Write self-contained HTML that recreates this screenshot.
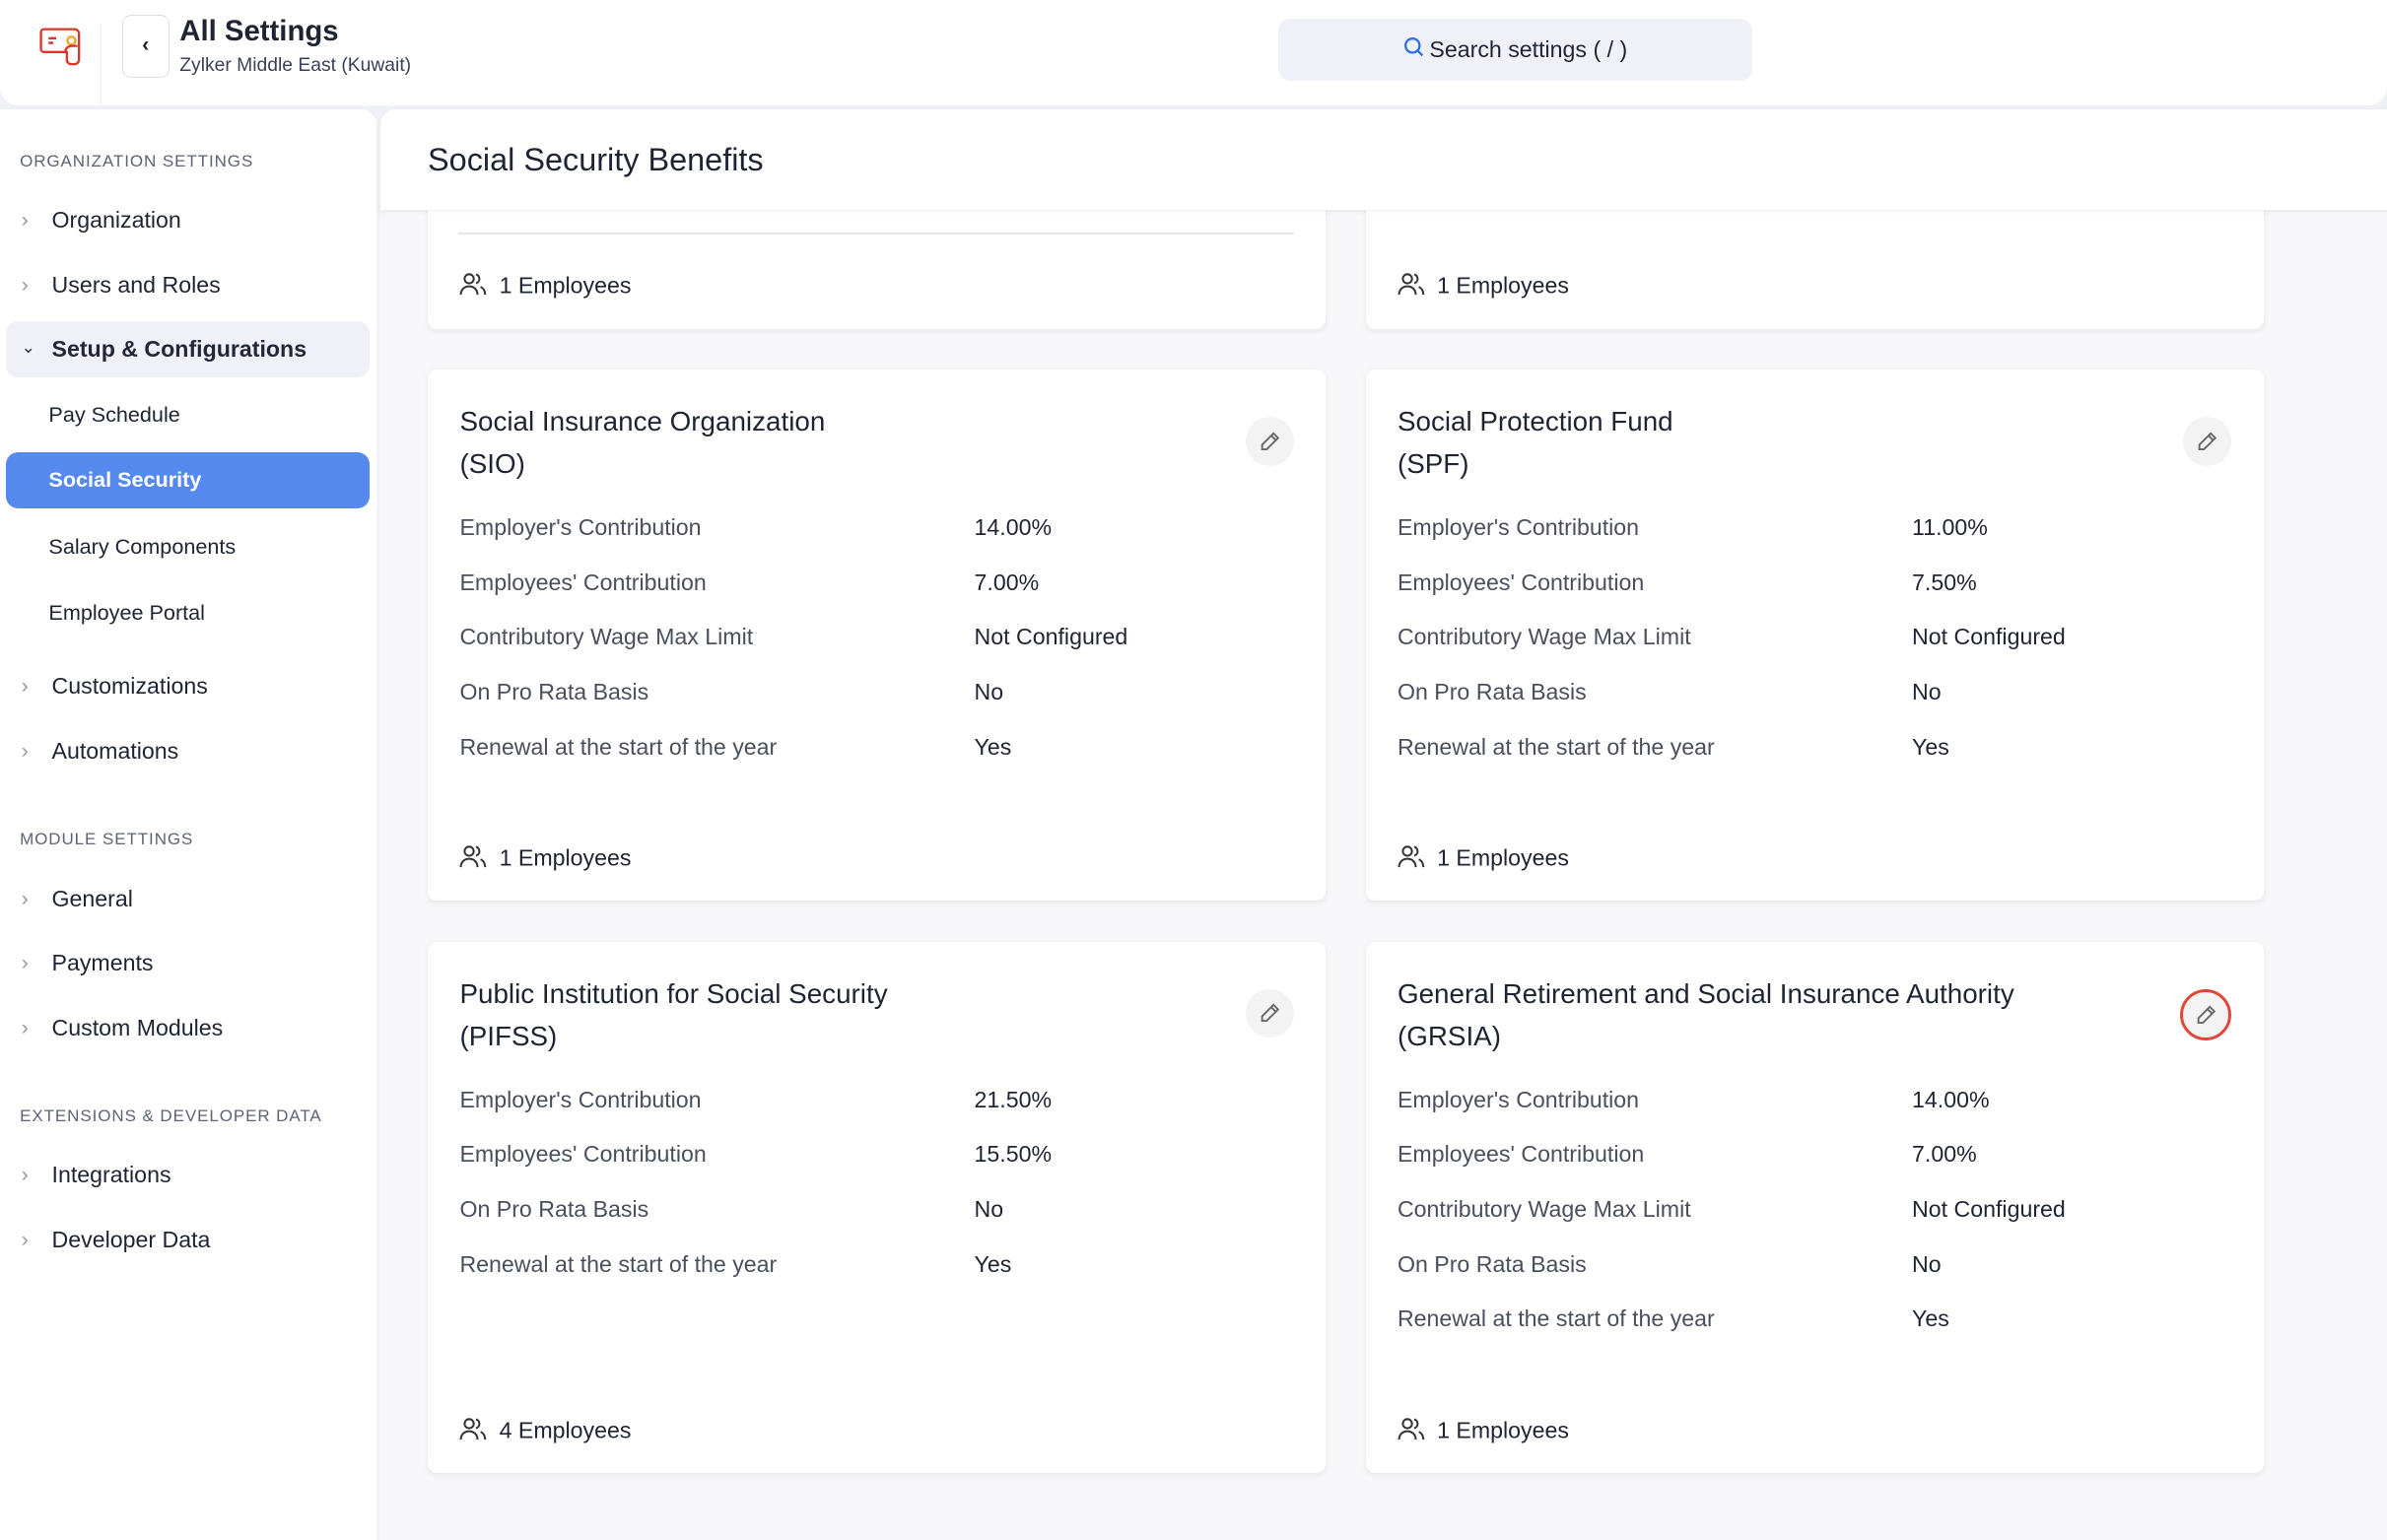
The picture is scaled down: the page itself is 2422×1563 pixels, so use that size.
<!DOCTYPE html>
<html><head><meta charset="utf-8"><style>
html,body{margin:0;padding:0}
body{width:1568px;height:1001px;zoom:1.54464;background:#f0f1f7;font-family:"Liberation Sans",sans-serif;color:#1f2433;position:relative;overflow:hidden}
.abs{position:absolute}
.top{left:0;top:0;width:1568px;height:69px;background:#fff;border-radius:0 0 12px 12px}
.side{left:0;top:72px;width:247px;height:940px;background:#fff;border-radius:0 10px 0 0}
.main{left:250px;top:72px;width:1330px;height:940px;background:#f7f7f9;border-radius:10px 0 0 0}
.mhead{left:250px;top:72px;width:1330px;height:66px;background:#fff;box-shadow:0 1px 3px rgba(0,0,0,.06);border-radius:10px 0 0 0}
.sec{font-size:11px;letter-spacing:.6px;color:#5d6374;left:13px}
.it{left:34px;font-size:15px;color:#1f2433}
.chev{left:14px;font-size:14px;color:#999}
.sub{left:32px;font-size:14px;color:#1f2433}
.card{background:#fff;border-radius:6px;box-shadow:0 1px 4px rgba(0,0,0,.07);width:590px}
.t{font-size:18px;color:#1f2433;line-height:28px;left:21px;top:20px}
.r{font-size:15px;color:#4a4f5c;left:21px}
.v{font-size:15px;color:#1f2433;left:359px}
.emp{font-size:15px;color:#1f2433;left:21px}
.ed{width:32px;height:32px;border-radius:50%;background:#f3f3f4;right:21px;top:31px;display:flex;align-items:center;justify-content:center}
</style></head><body>
<div class="abs top"></div>
<svg class="abs" style="left:26px;top:16px" width="30" height="30" viewBox="0 0 30 30"><path d="M3 3h20a3 3 0 0 1 3 3v17a3 3 0 0 1-3 3h-2a3 3 0 0 1-3-3v-5H3a2 2 0 0 1-2-2V5a2 2 0 0 1 2-2z" fill="none" stroke="#d9352c" stroke-width="1.5"/><path d="M6 9h5M6 12h3" stroke="#d9352c" stroke-width="1.6"/><circle cx="21" cy="10.5" r="2.6" fill="none" stroke="#f0a830" stroke-width="1.6"/><path d="M17 18a4 4 0 0 1 4-4h4" fill="none" stroke="#d9352c" stroke-width="1.5"/></svg>
<div class="abs" style="left:66px;top:16px;width:1px;height:64px;background:#eee"></div>
<div class="abs" style="left:80px;top:10px;width:30px;height:40px;border:1px solid #dcdde3;border-radius:6px;text-align:center;line-height:38px;font-size:14px;font-weight:bold">&#8249;</div>
<div class="abs" style="left:118px;top:10px;font-size:19px;font-weight:bold">All Settings</div>
<div class="abs" style="left:118px;top:36px;font-size:12.5px;color:#3b4257">Zylker Middle East (Kuwait)</div>
<div class="abs" style="left:840px;top:12px;width:311px;height:41px;background:#f0f1f8;border-radius:8px;text-align:center;line-height:41px;font-size:15px">
<svg width="14" height="14" viewBox="0 0 14 14" style="vertical-align:-1px;margin-right:3px"><circle cx="6" cy="6" r="4.6" fill="none" stroke="#2f6fe4" stroke-width="1.5"/><path d="M9.5 9.5l3 3" stroke="#2f6fe4" stroke-width="1.5"/></svg>Search settings ( / )</div>

<div class="abs side"></div>
<div class="abs sec" style="top:100px">ORGANIZATION SETTINGS</div>
<div class="abs chev" style="top:136px">&#8250;</div><div class="abs it" style="top:136px">Organization</div>
<div class="abs chev" style="top:179px">&#8250;</div><div class="abs it" style="top:179px">Users and Roles</div>
<div class="abs" style="left:4px;top:211px;width:239px;height:37px;background:#eff0f8;border-radius:8px"></div>
<div class="abs" style="left:14px;top:222px;font-size:11px;color:#333">&#8964;</div><div class="abs it" style="top:221px;font-weight:bold;color:#232838">Setup &amp; Configurations</div>
<div class="abs sub" style="top:264px">Pay Schedule</div>
<div class="abs" style="left:4px;top:297px;width:239px;height:37px;background:#5589ee;border-radius:8px"></div>
<div class="abs sub" style="top:307px;color:#fff;font-weight:bold">Social Security</div>
<div class="abs sub" style="top:351px">Salary Components</div>
<div class="abs sub" style="top:394px">Employee Portal</div>
<div class="abs chev" style="top:442px">&#8250;</div><div class="abs it" style="top:442px">Customizations</div>
<div class="abs chev" style="top:485px">&#8250;</div><div class="abs it" style="top:485px">Automations</div>
<div class="abs sec" style="top:545px">MODULE SETTINGS</div>
<div class="abs chev" style="top:582px">&#8250;</div><div class="abs it" style="top:582px">General</div>
<div class="abs chev" style="top:624px">&#8250;</div><div class="abs it" style="top:624px">Payments</div>
<div class="abs chev" style="top:667px">&#8250;</div><div class="abs it" style="top:667px">Custom Modules</div>
<div class="abs sec" style="top:727px">EXTENSIONS &amp; DEVELOPER DATA</div>
<div class="abs chev" style="top:763px">&#8250;</div><div class="abs it" style="top:763px">Integrations</div>
<div class="abs chev" style="top:806px">&#8250;</div><div class="abs it" style="top:806px">Developer Data</div>

<div class="abs main"></div>

<!-- row0 -->
<div class="abs card" style="left:281px;top:120px;height:96px"><div class="abs" style="left:20px;top:33px;width:549px;height:1px;background:#e6e6ea"></div><div class="abs emp" style="top:59px"><svg width="18" height="16" viewBox="0 0 18 16" style="vertical-align:-2px;margin-right:8px"><circle cx="6.5" cy="4.5" r="3" fill="none" stroke="#333" stroke-width="1.3"/><path d="M1 15c0-3.5 2.5-5.5 5.5-5.5S12 11.5 12 15M11 1.6a3 3 0 0 1 0 5.8M14 9.8c1.8.8 3 2.6 3 5.2" fill="none" stroke="#333" stroke-width="1.3"/></svg>1 Employees</div></div>
<div class="abs card" style="left:897px;top:120px;height:96px"><div class="abs emp" style="top:59px"><svg width="18" height="16" viewBox="0 0 18 16" style="vertical-align:-2px;margin-right:8px"><circle cx="6.5" cy="4.5" r="3" fill="none" stroke="#333" stroke-width="1.3"/><path d="M1 15c0-3.5 2.5-5.5 5.5-5.5S12 11.5 12 15M11 1.6a3 3 0 0 1 0 5.8M14 9.8c1.8.8 3 2.6 3 5.2" fill="none" stroke="#333" stroke-width="1.3"/></svg>1 Employees</div></div>

<div class="abs mhead"></div>
<div class="abs" style="left:281px;top:93px;font-size:21px;color:#1f2433">Social Security Benefits</div>

<!-- row1 -->
<div class="abs card" style="left:281px;top:243px;height:349px">
<div class="abs t">Social Insurance Organization<br>(SIO)</div>
<div class="abs ed"><svg width="16" height="16" viewBox="0 0 16 16"><path d="M10.5 2.5l3 3L6 13H3v-3z M9 4l3 3" fill="none" stroke="#666" stroke-width="1.2"/></svg></div>
<div class="abs r" style="top:95px">Employer's Contribution</div><div class="abs v" style="top:95px">14.00%</div>
<div class="abs r" style="top:131px">Employees' Contribution</div><div class="abs v" style="top:131px">7.00%</div>
<div class="abs r" style="top:167px">Contributory Wage Max Limit</div><div class="abs v" style="top:167px">Not Configured</div>
<div class="abs r" style="top:203px">On Pro Rata Basis</div><div class="abs v" style="top:203px">No</div>
<div class="abs r" style="top:239px">Renewal at the start of the year</div><div class="abs v" style="top:239px">Yes</div>
<div class="abs emp" style="top:312px"><svg width="18" height="16" viewBox="0 0 18 16" style="vertical-align:-2px;margin-right:8px"><circle cx="6.5" cy="4.5" r="3" fill="none" stroke="#333" stroke-width="1.3"/><path d="M1 15c0-3.5 2.5-5.5 5.5-5.5S12 11.5 12 15M11 1.6a3 3 0 0 1 0 5.8M14 9.8c1.8.8 3 2.6 3 5.2" fill="none" stroke="#333" stroke-width="1.3"/></svg>1 Employees</div>
</div>
<div class="abs card" style="left:897px;top:243px;height:349px">
<div class="abs t">Social Protection Fund<br>(SPF)</div>
<div class="abs ed"><svg width="16" height="16" viewBox="0 0 16 16"><path d="M10.5 2.5l3 3L6 13H3v-3z M9 4l3 3" fill="none" stroke="#666" stroke-width="1.2"/></svg></div>
<div class="abs r" style="top:95px">Employer's Contribution</div><div class="abs v" style="top:95px">11.00%</div>
<div class="abs r" style="top:131px">Employees' Contribution</div><div class="abs v" style="top:131px">7.50%</div>
<div class="abs r" style="top:167px">Contributory Wage Max Limit</div><div class="abs v" style="top:167px">Not Configured</div>
<div class="abs r" style="top:203px">On Pro Rata Basis</div><div class="abs v" style="top:203px">No</div>
<div class="abs r" style="top:239px">Renewal at the start of the year</div><div class="abs v" style="top:239px">Yes</div>
<div class="abs emp" style="top:312px"><svg width="18" height="16" viewBox="0 0 18 16" style="vertical-align:-2px;margin-right:8px"><circle cx="6.5" cy="4.5" r="3" fill="none" stroke="#333" stroke-width="1.3"/><path d="M1 15c0-3.5 2.5-5.5 5.5-5.5S12 11.5 12 15M11 1.6a3 3 0 0 1 0 5.8M14 9.8c1.8.8 3 2.6 3 5.2" fill="none" stroke="#333" stroke-width="1.3"/></svg>1 Employees</div>
</div>

<!-- row2 -->
<div class="abs card" style="left:281px;top:619px;height:349px">
<div class="abs t">Public Institution for Social Security<br>(PIFSS)</div>
<div class="abs ed"><svg width="16" height="16" viewBox="0 0 16 16"><path d="M10.5 2.5l3 3L6 13H3v-3z M9 4l3 3" fill="none" stroke="#666" stroke-width="1.2"/></svg></div>
<div class="abs r" style="top:95px">Employer's Contribution</div><div class="abs v" style="top:95px">21.50%</div>
<div class="abs r" style="top:131px">Employees' Contribution</div><div class="abs v" style="top:131px">15.50%</div>
<div class="abs r" style="top:167px">On Pro Rata Basis</div><div class="abs v" style="top:167px">No</div>
<div class="abs r" style="top:203px">Renewal at the start of the year</div><div class="abs v" style="top:203px">Yes</div>
<div class="abs emp" style="top:312px"><svg width="18" height="16" viewBox="0 0 18 16" style="vertical-align:-2px;margin-right:8px"><circle cx="6.5" cy="4.5" r="3" fill="none" stroke="#333" stroke-width="1.3"/><path d="M1 15c0-3.5 2.5-5.5 5.5-5.5S12 11.5 12 15M11 1.6a3 3 0 0 1 0 5.8M14 9.8c1.8.8 3 2.6 3 5.2" fill="none" stroke="#333" stroke-width="1.3"/></svg>4 Employees</div>
</div>
<div class="abs card" style="left:897px;top:619px;height:349px">
<div class="abs t">General Retirement and Social Insurance Authority<br>(GRSIA)</div>
<div class="abs ed" style="border:2px solid #e0463a;width:30px;height:30px;top:31px"><svg width="16" height="16" viewBox="0 0 16 16"><path d="M10.5 2.5l3 3L6 13H3v-3z M9 4l3 3" fill="none" stroke="#666" stroke-width="1.2"/></svg></div>
<div class="abs r" style="top:95px">Employer's Contribution</div><div class="abs v" style="top:95px">14.00%</div>
<div class="abs r" style="top:131px">Employees' Contribution</div><div class="abs v" style="top:131px">7.00%</div>
<div class="abs r" style="top:167px">Contributory Wage Max Limit</div><div class="abs v" style="top:167px">Not Configured</div>
<div class="abs r" style="top:203px">On Pro Rata Basis</div><div class="abs v" style="top:203px">No</div>
<div class="abs r" style="top:239px">Renewal at the start of the year</div><div class="abs v" style="top:239px">Yes</div>
<div class="abs emp" style="top:312px"><svg width="18" height="16" viewBox="0 0 18 16" style="vertical-align:-2px;margin-right:8px"><circle cx="6.5" cy="4.5" r="3" fill="none" stroke="#333" stroke-width="1.3"/><path d="M1 15c0-3.5 2.5-5.5 5.5-5.5S12 11.5 12 15M11 1.6a3 3 0 0 1 0 5.8M14 9.8c1.8.8 3 2.6 3 5.2" fill="none" stroke="#333" stroke-width="1.3"/></svg>1 Employees</div>
</div>
</body></html>
